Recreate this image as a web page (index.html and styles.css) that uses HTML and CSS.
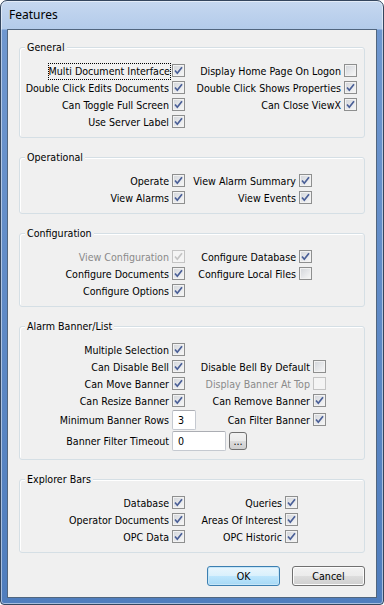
FILE: index.html
```html
<!DOCTYPE html>
<html lang="en">
<head>
<meta charset="UTF-8">
<title>Features</title>
<link rel="stylesheet" href="styles.css">
</head>
<body>

<div class="window">
    <div class="titlebar">Features</div>
    <div class="client">

        <!-- General -->
        <div class="group general">
            <div class="group-title">General</div>
            <div class="grid">
                <span class="lbl"><span class="focus">Multi Document Interface</span></span>
                <span class="cb on"><svg viewBox="0 0 11 11"><path d="M2 5.5 L4.3 8.2 L9 2.2"/></svg></span>
                <span class="lbl">Display Home Page On Logon</span>
                <span class="cb"></span>

                <span class="lbl">Double Click Edits Documents</span>
                <span class="cb on"><svg viewBox="0 0 11 11"><path d="M2 5.5 L4.3 8.2 L9 2.2"/></svg></span>
                <span class="lbl">Double Click Shows Properties</span>
                <span class="cb on"><svg viewBox="0 0 11 11"><path d="M2 5.5 L4.3 8.2 L9 2.2"/></svg></span>

                <span class="lbl">Can Toggle Full Screen</span>
                <span class="cb on"><svg viewBox="0 0 11 11"><path d="M2 5.5 L4.3 8.2 L9 2.2"/></svg></span>
                <span class="lbl">Can Close ViewX</span>
                <span class="cb on"><svg viewBox="0 0 11 11"><path d="M2 5.5 L4.3 8.2 L9 2.2"/></svg></span>

                <span class="lbl">Use Server Label</span>
                <span class="cb on"><svg viewBox="0 0 11 11"><path d="M2 5.5 L4.3 8.2 L9 2.2"/></svg></span>
                <span></span><span></span>
            </div>
        </div>

        <!-- Operational -->
        <div class="group operational">
            <div class="group-title">Operational</div>
            <div class="grid">
                <span class="lbl">Operate</span>
                <span class="cb on"><svg viewBox="0 0 11 11"><path d="M2 5.5 L4.3 8.2 L9 2.2"/></svg></span>
                <span class="lbl">View Alarm Summary</span>
                <span class="cb on"><svg viewBox="0 0 11 11"><path d="M2 5.5 L4.3 8.2 L9 2.2"/></svg></span>

                <span class="lbl">View Alarms</span>
                <span class="cb on"><svg viewBox="0 0 11 11"><path d="M2 5.5 L4.3 8.2 L9 2.2"/></svg></span>
                <span class="lbl">View Events</span>
                <span class="cb on"><svg viewBox="0 0 11 11"><path d="M2 5.5 L4.3 8.2 L9 2.2"/></svg></span>
            </div>
        </div>

        <!-- Configuration -->
        <div class="group configuration">
            <div class="group-title">Configuration</div>
            <div class="grid">
                <span class="lbl disabled">View Configuration</span>
                <span class="cb on disabled"><svg viewBox="0 0 11 11"><path d="M2 5.5 L4.3 8.2 L9 2.2"/></svg></span>
                <span class="lbl">Configure Database</span>
                <span class="cb on"><svg viewBox="0 0 11 11"><path d="M2 5.5 L4.3 8.2 L9 2.2"/></svg></span>

                <span class="lbl">Configure Documents</span>
                <span class="cb on"><svg viewBox="0 0 11 11"><path d="M2 5.5 L4.3 8.2 L9 2.2"/></svg></span>
                <span class="lbl">Configure Local Files</span>
                <span class="cb"></span>

                <span class="lbl">Configure Options</span>
                <span class="cb on"><svg viewBox="0 0 11 11"><path d="M2 5.5 L4.3 8.2 L9 2.2"/></svg></span>
                <span></span><span></span>
            </div>
        </div>

        <!-- Alarm Banner/List -->
        <div class="group alarm">
            <div class="group-title">Alarm Banner/List</div>
            <div class="grid">
                <span class="lbl">Multiple Selection</span>
                <span class="cb on"><svg viewBox="0 0 11 11"><path d="M2 5.5 L4.3 8.2 L9 2.2"/></svg></span>
                <span></span><span></span>

                <span class="lbl">Can Disable Bell</span>
                <span class="cb on"><svg viewBox="0 0 11 11"><path d="M2 5.5 L4.3 8.2 L9 2.2"/></svg></span>
                <span class="lbl">Disable Bell By Default</span>
                <span class="cb"></span>

                <span class="lbl">Can Move Banner</span>
                <span class="cb on"><svg viewBox="0 0 11 11"><path d="M2 5.5 L4.3 8.2 L9 2.2"/></svg></span>
                <span class="lbl disabled">Display Banner At Top</span>
                <span class="cb disabled"></span>

                <span class="lbl">Can Resize Banner</span>
                <span class="cb on"><svg viewBox="0 0 11 11"><path d="M2 5.5 L4.3 8.2 L9 2.2"/></svg></span>
                <span class="lbl">Can Remove Banner</span>
                <span class="cb on"><svg viewBox="0 0 11 11"><path d="M2 5.5 L4.3 8.2 L9 2.2"/></svg></span>

                <span class="lbl">Minimum Banner Rows</span>
                <span class="field"><input class="txt short" type="text" value="3"></span>
                <span class="lbl">Can Filter Banner</span>
                <span class="cb on"><svg viewBox="0 0 11 11"><path d="M2 5.5 L4.3 8.2 L9 2.2"/></svg></span>

                <span class="lbl">Banner Filter Timeout</span>
                <span class="field wide"><input class="txt long" type="text" value="0"><button class="dots">...</button></span>
            </div>
        </div>

        <!-- Explorer Bars -->
        <div class="group explorer">
            <div class="group-title">Explorer Bars</div>
            <div class="grid">
                <span class="lbl">Database</span>
                <span class="cb on"><svg viewBox="0 0 11 11"><path d="M2 5.5 L4.3 8.2 L9 2.2"/></svg></span>
                <span class="lbl">Queries</span>
                <span class="cb on"><svg viewBox="0 0 11 11"><path d="M2 5.5 L4.3 8.2 L9 2.2"/></svg></span>

                <span class="lbl">Operator Documents</span>
                <span class="cb on"><svg viewBox="0 0 11 11"><path d="M2 5.5 L4.3 8.2 L9 2.2"/></svg></span>
                <span class="lbl">Areas Of Interest</span>
                <span class="cb on"><svg viewBox="0 0 11 11"><path d="M2 5.5 L4.3 8.2 L9 2.2"/></svg></span>

                <span class="lbl">OPC Data</span>
                <span class="cb on"><svg viewBox="0 0 11 11"><path d="M2 5.5 L4.3 8.2 L9 2.2"/></svg></span>
                <span class="lbl">OPC Historic</span>
                <span class="cb on"><svg viewBox="0 0 11 11"><path d="M2 5.5 L4.3 8.2 L9 2.2"/></svg></span>
            </div>
        </div>

        <div class="buttons">
            <button class="btn default">OK</button>
            <button class="btn">Cancel</button>
        </div>
    </div>
</div>

</body>
</html>
```

FILE: styles.css
```css
* {
    box-sizing: border-box;
}
body {
    margin: 0;
    background-color: #fff;
    font-family: "DejaVu Sans Condensed", "Liberation Sans", sans-serif;
    font-size: 10.6px;
    color: #000;
}
.window {
    width: 384px;
    height: 605px;
    padding: 0 6px 6px 6px;
    border: 1px solid #34465e;
    border-radius: 7px 7px 4px 4px;
    background: linear-gradient(to bottom, #c6d8f0 0, #b3cbea 28px, #6f97cf 29px, #4f7dbd 100%);
    box-shadow: inset 0 0 0 1px rgba(255, 255, 255, 0.5);
}
.titlebar {
    height: 28px;
    line-height: 28px;
    padding-left: 2px;
    font-family: "Noto Sans", "Open Sans", sans-serif;
    font-size: 12px;
    color: #000;
}
.client {
    height: 569px;
    border: 1px solid #51667f;
    background-color: #f0f0f0;
    padding-top: 17px;
}

/* Group boxes */
.group {
    margin: 0 11px 19px 11px;
    border: 1px solid #d5dfe5;
    border-radius: 3px;
    box-shadow: inset 1px 1px 0 #fff;
    padding-bottom: 7px;
}
.group.alarm { padding-bottom: 8px; }
.group-title {
    width: fit-content;
    margin: -7px 0 0 5px;
    padding: 0 2px;
    line-height: 13px;
    background-color: #f0f0f0;
}
.grid {
    display: grid;
    grid-auto-rows: 17px;
    column-gap: 3px;
    align-items: center;
    margin-top: 8px;
}
.general .grid { grid-template-columns: 149px 13px 153px 13px; }
.operational .grid,
.configuration .grid { grid-template-columns: 149px 13px 108px 13px; }
.alarm .grid {
    grid-template-columns: 149px 13px 122px 13px;
    grid-template-rows: repeat(4, 17px) 21px 21px;
}
.explorer .grid { grid-template-columns: 149px 13px 94px 13px; }

.lbl {
    text-align: right;
    white-space: nowrap;
    padding-top: 1px;
}
.lbl.disabled { color: #8a8a8a; }
.focus {
    display: inline-block;
    line-height: 15px;
    border: 1px dotted #000;
    padding-left: 0;
    margin-right: -2px;
}

/* Checkboxes */
.cb {
    width: 13px;
    height: 13px;
    border: 1px solid #8e8f8f;
    background: linear-gradient(135deg, #d2d5da, #f8f8f8);
    box-shadow: inset 0 0 0 1px #f2f2f2;
}
.cb svg {
    display: block;
    width: 11px;
    height: 11px;
}
.cb svg path {
    fill: none;
    stroke: #4a5f97;
    stroke-width: 1.7;
}
.cb.disabled {
    border-color: #c4c4c4;
    background: #f4f4f4;
    box-shadow: none;
}
.cb.disabled svg path { stroke: #c4c4c4; }

/* Text fields */
.field {
    display: flex;
    align-items: center;
    gap: 3px;
}
.field.wide { grid-column: 2 / -1; }
.txt {
    flex: none;
    height: 20px;
    padding: 0 0 0 5px;
    border: 1px solid #c5c9d0;
    border-top-color: #abadb3;
    border-radius: 2px;
    background-color: #fff;
    font-family: inherit;
    font-size: inherit;
    color: #000;
}
.txt.short { width: 24px; }
.txt.long { width: 54px; }
.dots {
    width: 18px;
    height: 18px;
    padding: 0;
    border: 1px solid #707070;
    border-radius: 3px;
    background: linear-gradient(#f2f2f2 0%, #ebebeb 50%, #dddddd 50%, #cfcfcf 100%);
    font-family: inherit;
    font-size: inherit;
    line-height: 14px;
}

/* Dialog buttons */
.buttons {
    display: flex;
    justify-content: flex-end;
    gap: 12px;
    padding-right: 11px;
    margin-top: -6px;
}
.btn {
    width: 73px;
    height: 20px;
    padding: 0;
    border: 1px solid #707070;
    border-radius: 3px;
    background: linear-gradient(#f2f2f2 0%, #ebebeb 50%, #dddddd 50%, #cfcfcf 100%);
    box-shadow: inset 0 0 0 1px #fcfcfc;
    font-family: inherit;
    font-size: inherit;
    color: #000;
}
.btn.default {
    border-color: #3c7fb1;
    background: linear-gradient(#eaf6fd 0%, #d9f0fc 50%, #bee6fd 50%, #a7d9f5 100%);
    box-shadow: inset 0 0 0 1px #c6e6f8;
}
```
